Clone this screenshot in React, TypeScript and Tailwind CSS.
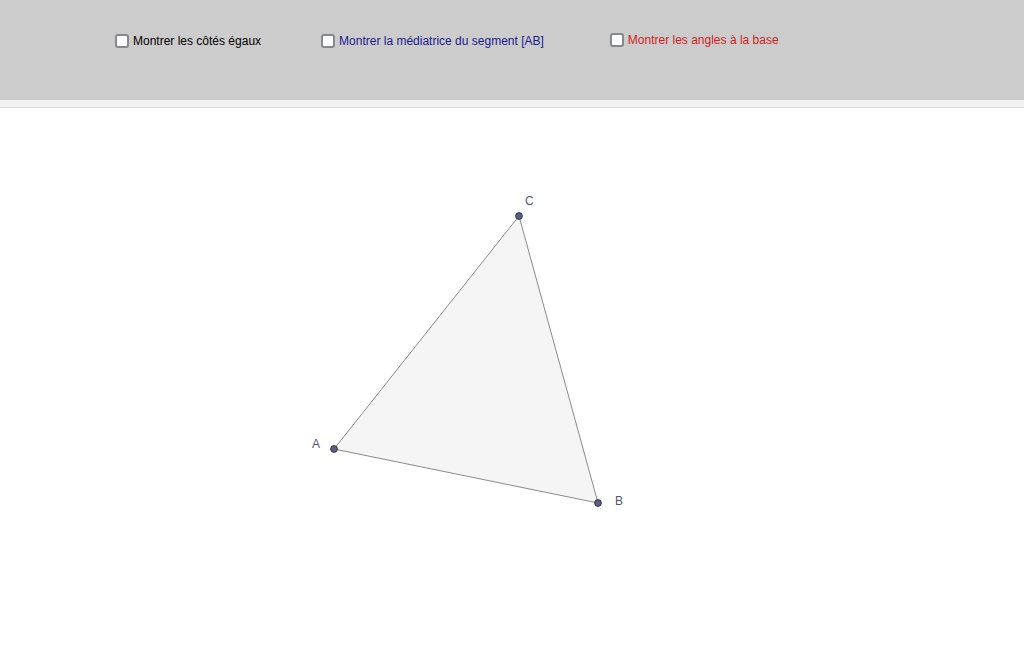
import React from 'react'

const font = { fontFamily: '"Liberation Sans", Arial, sans-serif' }

function Check({ label, color, className }: { label: string; color: string; className: string }) {
  return (
    <label className={`flex items-center gap-[4px] text-[12px] leading-[14px] ${color} ${className}`}>
      <span className="block w-[14px] h-[14px] bg-white border-2 border-[#87878f] rounded-[3px]" />
      <span>{label}</span>
    </label>
  )
}

export default function App() {
  // canvas starts at y=108
  const oy = 108
  const A = { x: 334, y: 449 - oy }
  const B = { x: 598, y: 503 - oy }
  const C = { x: 519, y: 216 - oy }

  return (
    <div className="w-[1024px] h-[671px] bg-white overflow-hidden" style={font}>
      <div className="h-[100px] bg-[#cccccc]">
        <div className="flex items-start pt-[34px]">
          <Check label="Montrer les côtés égaux" color="text-black" className="ml-[115px]" />
          <Check label="Montrer la médiatrice du segment [AB]" color="text-[#1a1a8e]" className="ml-[60px]" />
          <Check label="Montrer les angles à la base" color="text-[#d01c1c]" className="ml-[66px] -mt-[1px]" />
        </div>
      </div>
      <div className="h-[7px] bg-[#f1f1f1]" />
      <div className="h-px bg-[#dcdcdc]" />
      <svg width="1024" height="563" className="block">
        <polygon
          points={`${A.x},${A.y} ${B.x},${B.y} ${C.x},${C.y}`}
          fill="#f5f5f5"
          stroke="#8a8a8a"
          strokeWidth="1"
        />
        {[A, B, C].map((p, i) => (
          <circle key={i} cx={p.x} cy={p.y} r="3.4" fill="#5d5d87" stroke="#222" strokeWidth="0.8" />
        ))}
        <g fill="#545478" fontSize="12" style={font}>
          <text x="312" y={448 - oy}>A</text>
          <text x="615" y={505 - oy}>B</text>
          <text x="525" y={205 - oy}>C</text>
        </g>
      </svg>
    </div>
  )
}
